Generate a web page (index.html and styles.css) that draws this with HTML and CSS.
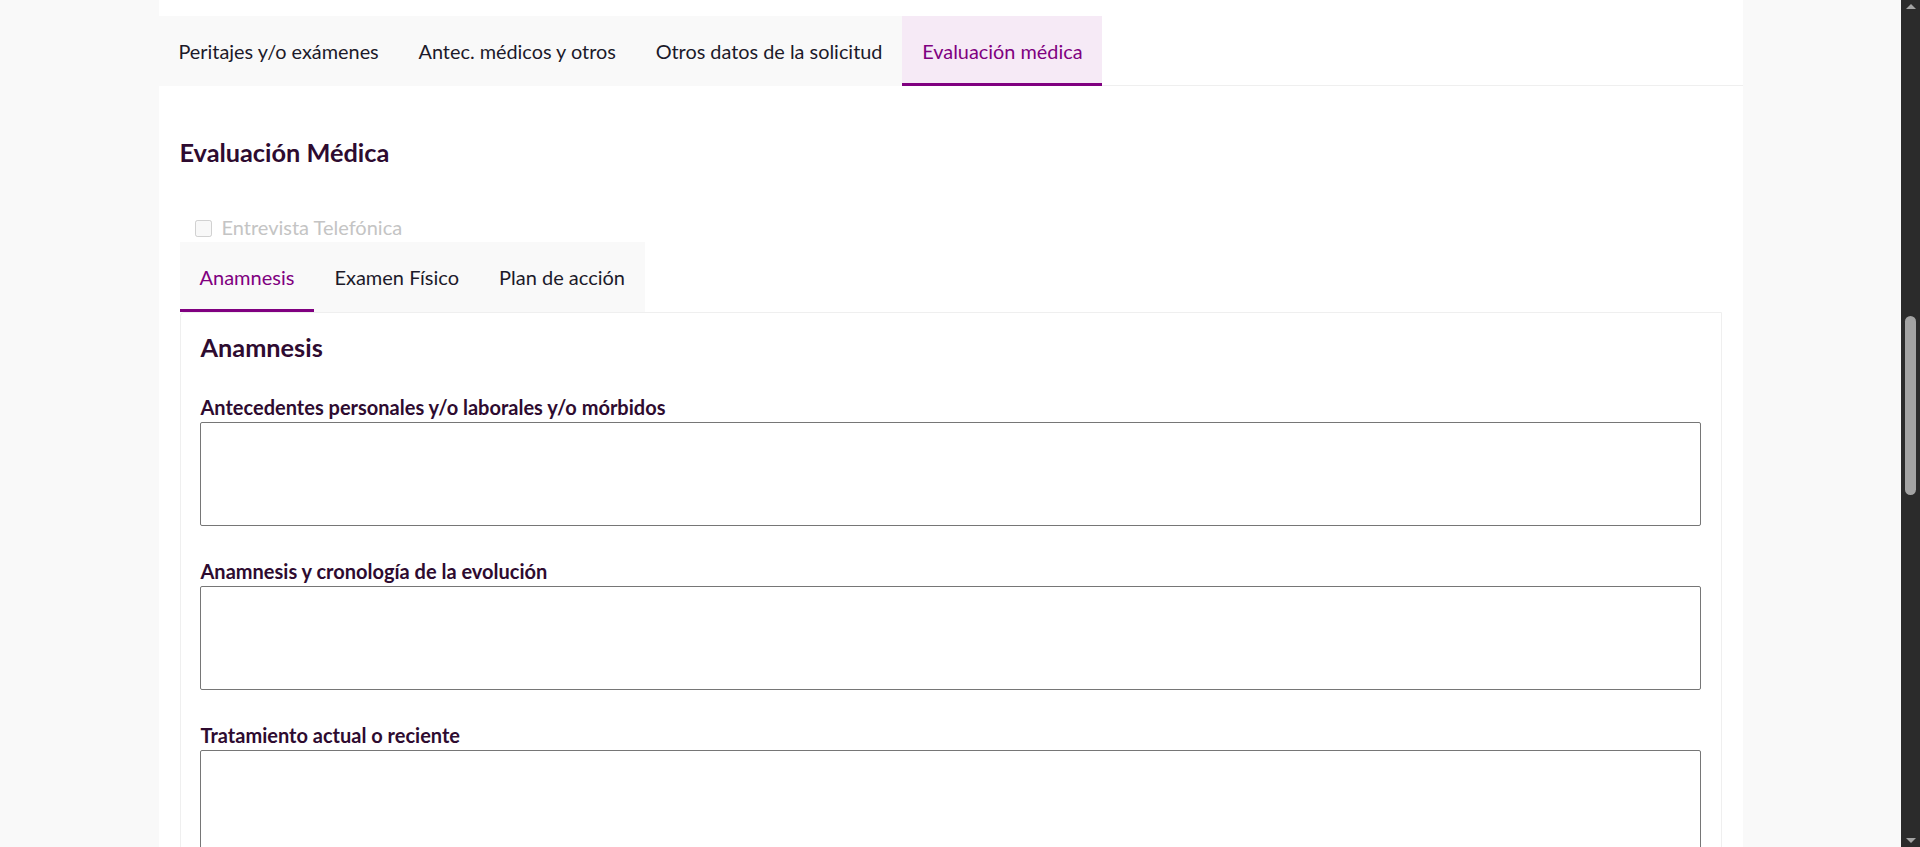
FILE: index.html
```html
<!DOCTYPE html>
<html lang="es">
<head>
<meta charset="utf-8">
<title>Evaluación médica</title>
<link rel="stylesheet" href="styles.css">
</head>
<body>
<div class="viewport">
  <div class="page">
    <div class="card">
      <nav class="tabs tabs-main">
        <a class="tab">Peritajes y/o exámenes</a>
        <a class="tab">Antec. médicos y otros</a>
        <a class="tab">Otros datos de la solicitud</a>
        <a class="tab tab-active tab-active-fill">Evaluación médica</a>
      </nav>
      <section class="content">
        <h2 class="title">Evaluación Médica</h2>
        <label class="check">
          <input type="checkbox" disabled>
          <span>Entrevista Telefónica</span>
        </label>
        <nav class="tabs tabs-sub">
          <a class="tab tab-active">Anamnesis</a>
          <a class="tab">Examen Físico</a>
          <a class="tab">Plan de acción</a>
        </nav>
        <div class="panel">
          <h3 class="panel-title">Anamnesis</h3>
          <div class="field">
            <label class="field-label">Antecedentes personales y/o laborales y/o mórbidos</label>
            <textarea class="field-input"></textarea>
          </div>
          <div class="field">
            <label class="field-label">Anamnesis y cronología de la evolución</label>
            <textarea class="field-input"></textarea>
          </div>
          <div class="field">
            <label class="field-label">Tratamiento actual o reciente</label>
            <textarea class="field-input"></textarea>
          </div>
        </div>
      </section>
    </div>
  </div>
  <div class="scrollbar">
    <div class="arrow arrow-up"></div>
    <div class="track"><div class="thumb"></div></div>
    <div class="arrow arrow-down"></div>
  </div>
</div>
</body>
</html>
```
FILE: styles.css
```css
html, body {
  margin: 0;
  padding: 0;
  height: 100%;
  overflow: hidden;
}
body {
  background: #f9f9f9;
  font-family: Lato, "Noto Sans", sans-serif;
  color: #2e0b30;
}
.viewport {
  display: flex;
  height: 847px;
}
.page {
  flex: 1;
  overflow: hidden;
}
.card {
  width: 1584px;
  margin: 0 auto;
  background: #fff;
  padding-top: 16px;
  min-height: 900px;
}
.tabs {
  display: flex;
  border-bottom: 1px solid #efefef;
}
.tab {
  display: flex;
  align-items: center;
  height: 70px;
  box-sizing: border-box;
  padding: 3px 20px 0;
  border-bottom: 3px solid transparent;
  background: #f9f9f9;
  font-size: 20px;
  color: #1c1a2a;
  white-space: nowrap;
}
.tabs-main .tab {
  margin-bottom: -1px;
  font-size: 19.875px;
  padding: 3px 19.9px 0;
}
.tab-active {
  color: #800080;
  border-bottom-color: #800080;
}
.tab-active-fill {
  background: #f6eaf6;
}
.content {
  padding: 0 21px;
}
.title {
  margin: 51px 0 0;
  font-size: 25.3px;
  font-weight: 700;
  color: #2e0b30;
}
.check {
  display: flex;
  align-items: center;
  gap: 10px;
  margin: 48px 0 0 15px;
  font-size: 20px;
  color: #c4c4c4;
  height: 24px;
}
.check input {
  margin: 2px 0 0;
  width: 17px;
  height: 17px;
}
.tabs-sub {
  width: fit-content;
  border-bottom: none;
  margin-top: 3px;
}
.panel {
  border: 1px solid #efefef;
  border-radius: 4px 0 0 0;
  padding: 18.5px 20px 40px;
}
.panel-title {
  margin: 0;
  font-size: 25.3px;
  font-weight: 700;
  color: #2e0b30;
}
.field {
  margin-top: 33px;
}
.field + .field {
  margin-top: 33px;
}
.field-label {
  display: block;
  font-size: 20px;
  font-weight: 700;
  color: #2e0b30;
  margin-bottom: 3px;
}
.field-input {
  display: block;
  box-sizing: border-box;
  width: 1501px;
  height: 104px;
  border: 1px solid #767676;
  border-radius: 2px;
  resize: none;
  margin: 0 0 0 -0.5px;
  font-family: inherit;
}
.scrollbar {
  width: 19px;
  background: #2b2b2b;
  display: flex;
  flex-direction: column;
  align-items: center;
}
.arrow {
  width: 0;
  height: 0;
  border-left: 5px solid transparent;
  border-right: 5px solid transparent;
}
.arrow-up {
  margin-top: 4px;
  border-bottom: 5px solid #a3a3a3;
}
.arrow-down {
  margin-bottom: 4px;
  border-top: 5px solid #a3a3a3;
}
.track {
  flex: 1;
  width: 100%;
  display: flex;
  justify-content: center;
}
.thumb {
  width: 11px;
  height: 179px;
  margin-top: 307px;
  background: #a3a3a3;
  border-radius: 6px;
}
```
